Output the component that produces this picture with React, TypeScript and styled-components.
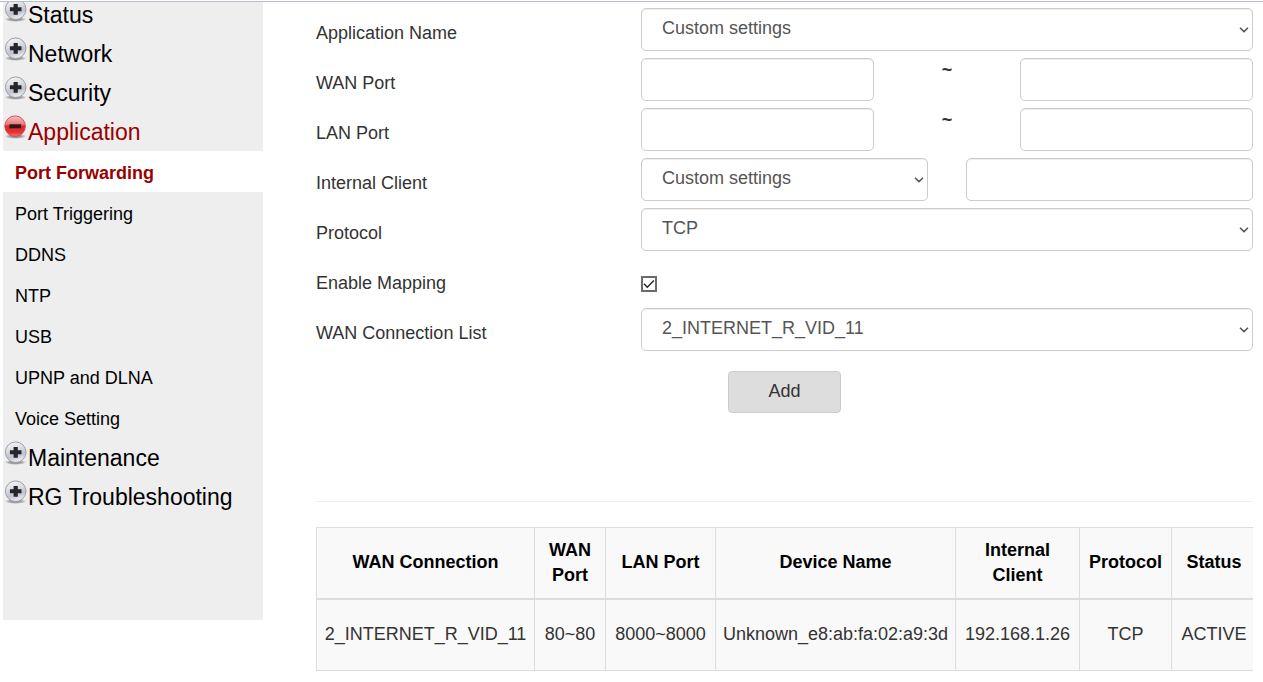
import React from "react";
import styled, { createGlobalStyle, css } from "styled-components";

const GlobalStyle = createGlobalStyle`
  *, *::before, *::after { box-sizing: border-box; }
  body {
    margin: 0;
    background: #fff;
    color: #333;
    font-family: "Liberation Sans", Arial, Helvetica, sans-serif;
    font-size: 18px;
    line-height: 25px;
    overflow: hidden;
  }
`;

const Page = styled.div`
  display: flex;
  align-items: flex-start;
  margin-top: 1px;
  border-top: 1px solid #b6bec8;
`;

const Sidebar = styled.nav`
  flex: 0 0 260px;
  min-height: 618px;
  margin-left: 3px;
  background: #eee;
  overflow: hidden;
`;

/* The menu is scrolled a little past its first entry. */
const Menu = styled.ul`
  list-style: none;
  margin: -7px 0 0;
  padding: 0;
`;

const SubMenu = styled.ul`
  list-style: none;
  margin: 0;
  padding: 0;
`;

const MenuLink = styled.a<{ $open?: boolean }>`
  display: flex;
  align-items: center;
  height: 39px;
  padding-top: 2px;
  font-size: 23px;
  text-decoration: none;
  color: ${(p) => (p.$open ? "#900" : "#000")};

  svg {
    flex: none;
    align-self: flex-start;
    margin-top: 1px;
  }
`;

const SubLink = styled.a<{ $active?: boolean }>`
  display: block;
  padding: 10px 12px 6px;
  text-decoration: none;
  color: #000;
  ${(p) =>
    p.$active &&
    css`
      background: #fff;
      color: #900;
      font-weight: bold;
    `}
`;

const Main = styled.main`
  flex: 1;
  min-width: 0;
  padding: 6px 10px 11px 53px;
`;

const Form = styled.form`
  display: flex;
  flex-direction: column;
  gap: 7px;
`;

const Row = styled.div`
  display: grid;
  grid-template-columns: 325fr 612fr;
  min-height: 43px;
`;

const Label = styled.label`
  padding-top: 13px;
`;

const Fields = styled.div`
  display: flex;
  justify-content: space-between;
  align-items: flex-start;
`;

const control = css`
  height: 43px;
  margin: 0;
  border: 1px solid #ccc;
  border-radius: 5px;
  background-color: #fff;
  box-shadow: inset 0 1px 1px rgba(0, 0, 0, 0.075);
  color: #555;
  font: inherit;
`;

const SelectBox = styled.span<{ $width?: string }>`
  display: grid;
  align-items: center;
  width: ${(p) => p.$width ?? "100%"};

  > * {
    grid-area: 1 / 1;
  }

  svg {
    justify-self: end;
    margin-right: 4px;
    pointer-events: none;
  }
`;

const NativeSelect = styled.select`
  ${control}
  appearance: none;
  width: 100%;
  padding: 0 20px 2px;
`;

const Input = styled.input<{ $width: string }>`
  ${control}
  width: ${(p) => p.$width};
  padding: 8px 20px;
`;

const Tilde = styled.span`
  font-weight: bold;
`;

const CheckWrap = styled.span`
  display: grid;
  margin-top: 18px;

  > * {
    grid-area: 1 / 1;
  }

  svg {
    pointer-events: none;
    visibility: hidden;
  }

  input:checked + svg {
    visibility: visible;
  }
`;

const Checkbox = styled.input`
  appearance: none;
  width: 16px;
  height: 16px;
  margin: 0;
  border: 2px solid #6b6b6b;
  background: #fff;
`;

const Actions = styled.div`
  display: grid;
  grid-template-columns: 412fr 525fr;
  margin-top: 13px;
`;

const AddButton = styled.button`
  grid-column: 2;
  justify-self: start;
  width: 113px;
  height: 42px;
  padding: 0 0 2px;
  border: 1px solid #ccc;
  border-radius: 4px;
  background: #ddd;
  color: #333;
  font: inherit;
`;

const Divider = styled.hr`
  margin: 88px 0 25px;
  border: 0;
  border-top: 1px solid #eee;
`;

const TableScroll = styled.div`
  overflow: hidden;
`;

const Table = styled.table`
  width: 940px;
  table-layout: fixed;
  border-collapse: collapse;
  background: #f9f9f9;
  text-align: center;
`;

const Column = styled.col<{ $width: number }>`
  width: ${(p) => p.$width}px;
`;

const HeadCell = styled.th`
  height: 71px;
  padding: 0 5px;
  border: 1px solid #ddd;
  border-bottom-width: 2px;
  color: #000;
`;

const Cell = styled.td`
  height: 72px;
  padding: 0 5px 1px;
  border: 1px solid #ddd;
  white-space: nowrap;
`;

function ToggleIcon({ open }: { open?: boolean }) {
  const fill = open ? "toggle-red" : "toggle-silver";
  return (
    <svg width="25" height="25" viewBox="0 0 25 25" aria-hidden="true">
      <defs>
        <linearGradient id="toggle-silver" x1="0" y1="0" x2="0.3" y2="1">
          <stop offset="0" stopColor="#fafafb" />
          <stop offset="0.45" stopColor="#dcdee5" />
          <stop offset="0.75" stopColor="#bfc2d0" />
          <stop offset="1" stopColor="#e6e7ee" />
        </linearGradient>
        <linearGradient id="toggle-red" x1="0" y1="0" x2="0" y2="1">
          <stop offset="0" stopColor="#f6c4c6" />
          <stop offset="0.4" stopColor="#ec777b" />
          <stop offset="0.5" stopColor="#e0262d" />
          <stop offset="0.8" stopColor="#ee2e33" />
          <stop offset="1" stopColor="#f77f7c" />
        </linearGradient>
        <radialGradient id="toggle-shadow">
          <stop offset="0.5" stopColor="#777" stopOpacity="0.7" />
          <stop offset="1" stopColor="#777" stopOpacity="0" />
        </radialGradient>
      </defs>
      <ellipse cx="12.5" cy="21.3" rx="11" ry="2.6" fill="url(#toggle-shadow)" />
      <circle
        cx={open ? 12.1 : 12.7}
        cy="11.2"
        r="10.3"
        fill={`url(#${fill})`}
        stroke={open ? "#c5474b" : "#96979d"}
        strokeWidth="0.9"
      />
      {open ? (
        <rect x="6.4" y="9.3" width="11.7" height="4" fill="#2b1b1b" />
      ) : (
        <path
          d="M10.6 6h4.2v3.3h3.7v4h-3.7v3.4h-4.2v-3.4H6.9v-4h3.7z"
          fill="#26262a"
        />
      )}
    </svg>
  );
}

type Entry = { name: string; children?: string[] };

const menu: Entry[] = [
  { name: "Status" },
  { name: "Network" },
  { name: "Security" },
  {
    name: "Application",
    children: [
      "Port Forwarding",
      "Port Triggering",
      "DDNS",
      "NTP",
      "USB",
      "UPNP and DLNA",
      "Voice Setting",
    ],
  },
  { name: "Maintenance" },
  { name: "RG Troubleshooting" },
];

const columns = [
  { name: "WAN Connection", width: 218 },
  { name: "WAN Port", width: 71 },
  { name: "LAN Port", width: 110 },
  { name: "Device Name", width: 240 },
  { name: "Internal Client", width: 124 },
  { name: "Protocol", width: 92 },
  { name: "Status", width: 85 },
];

const mappings = [
  [
    "2_INTERNET_R_VID_11",
    "80~80",
    "8000~8000",
    "Unknown_e8:ab:fa:02:a9:3d",
    "192.168.1.26",
    "TCP",
    "ACTIVE",
  ],
];

function Select({
  id,
  option,
  width,
}: {
  id: string;
  option: string;
  width?: string;
}) {
  return (
    <SelectBox $width={width}>
      <NativeSelect id={id}>
        <option>{option}</option>
      </NativeSelect>
      <svg width="10" height="6" viewBox="0 0 10 6" aria-hidden="true">
        <path
          d="M1 0.8l4 3.8 4-3.8"
          fill="none"
          stroke="#555"
          strokeWidth="1.5"
        />
      </svg>
    </SelectBox>
  );
}

function PortRange({ id, label }: { id: string; label: string }) {
  return (
    <Row>
      <Label htmlFor={id}>{label}</Label>
      <Fields>
        <Input id={id} type="text" $width="38%" />
        <Tilde>~</Tilde>
        <Input type="text" aria-label={`${label} end`} $width="38%" />
      </Fields>
    </Row>
  );
}

export default function App() {
  return (
    <>
      <GlobalStyle />
      <Page>
        <Sidebar>
          <Menu>
            {menu.map((entry) => (
              <li key={entry.name}>
                <MenuLink href="#" $open={!!entry.children}>
                  <ToggleIcon open={!!entry.children} />
                  {entry.name}
                </MenuLink>
                {entry.children && (
                  <SubMenu>
                    {entry.children.map((child, i) => (
                      <li key={child}>
                        <SubLink href="#" $active={i === 0}>
                          {child}
                        </SubLink>
                      </li>
                    ))}
                  </SubMenu>
                )}
              </li>
            ))}
          </Menu>
        </Sidebar>
        <Main>
          <Form onSubmit={(e) => e.preventDefault()}>
            <Row>
              <Label htmlFor="app-name">Application Name</Label>
              <Fields>
                <Select id="app-name" option="Custom settings" />
              </Fields>
            </Row>
            <PortRange id="wan-port" label="WAN Port" />
            <PortRange id="lan-port" label="LAN Port" />
            <Row>
              <Label htmlFor="client">Internal Client</Label>
              <Fields>
                <Select
                  id="client"
                  option="Custom settings"
                  width="calc(50% - 19px)"
                />
                <Input
                  type="text"
                  aria-label="Client address"
                  $width="calc(50% - 19px)"
                />
              </Fields>
            </Row>
            <Row>
              <Label htmlFor="protocol">Protocol</Label>
              <Fields>
                <Select id="protocol" option="TCP" />
              </Fields>
            </Row>
            <Row>
              <Label htmlFor="mapping">Enable Mapping</Label>
              <Fields>
                <CheckWrap>
                  <Checkbox id="mapping" type="checkbox" defaultChecked />
                  <svg width="16" height="16" viewBox="0 0 16 16" aria-hidden="true">
                    <path
                      d="M3 7.8l3.3 3.4 6.6-6.8"
                      fill="none"
                      stroke="#222"
                      strokeWidth="1.4"
                    />
                  </svg>
                </CheckWrap>
              </Fields>
            </Row>
            <Row>
              <Label htmlFor="wan-list">WAN Connection List</Label>
              <Fields>
                <Select id="wan-list" option="2_INTERNET_R_VID_11" />
              </Fields>
            </Row>
            <Actions>
              <AddButton type="submit">Add</AddButton>
            </Actions>
          </Form>
          <Divider />
          <TableScroll>
            <Table>
              <colgroup>
                {columns.map((column) => (
                  <Column key={column.name} $width={column.width} />
                ))}
              </colgroup>
              <thead>
                <tr>
                  {columns.map((column) => (
                    <HeadCell key={column.name} scope="col">
                      {column.name}
                    </HeadCell>
                  ))}
                </tr>
              </thead>
              <tbody>
                {mappings.map((row) => (
                  <tr key={row[0]}>
                    {row.map((value) => (
                      <Cell key={value}>{value}</Cell>
                    ))}
                  </tr>
                ))}
              </tbody>
            </Table>
          </TableScroll>
        </Main>
      </Page>
    </>
  );
}
